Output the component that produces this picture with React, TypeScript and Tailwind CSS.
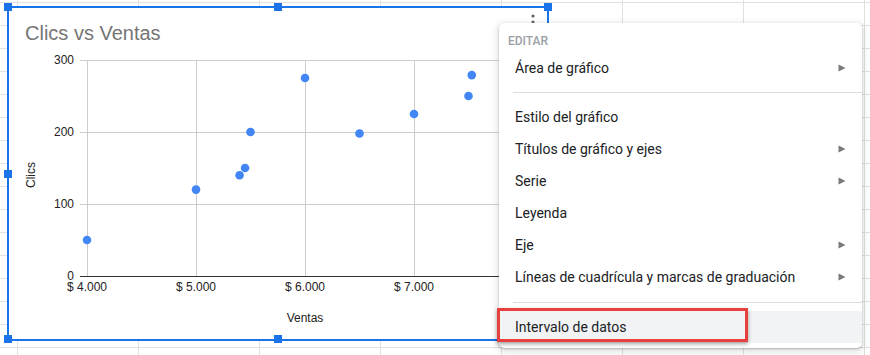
import React from "react";

const pts: [number, number][] = [
  [4000, 50],
  [5000, 120],
  [5400, 140],
  [5450, 150],
  [5500, 200],
  [6000, 275],
  [6500, 198],
  [7000, 225],
  [7500, 250],
  [7530, 279],
];

const sx = (v: number) => 78 + (v - 4000) * 0.109;
const sy = (c: number) => 231 - c * 0.72;

function Arrow() {
  return (
    <svg width="8" height="8" viewBox="0 0 8 8" className="shrink-0">
      <polygon points="0.5,0.5 7.5,4 0.5,7.5" fill="#7a7a7a" />
    </svg>
  );
}

function Item({ label, arrow }: { label: string; arrow?: boolean }) {
  return (
    <div className="h-8 flex items-center justify-between pl-4 pr-4 text-[14px] text-[#202124]">
      <span>{label}</span>
      {arrow ? <Arrow /> : null}
    </div>
  );
}

function Handle({ cls }: { cls: string }) {
  return <div className={`absolute w-2 h-2 bg-[#1a73e8] ${cls}`} />;
}

export default function App() {
  const yTicks = [
    { v: 300, y: 15 },
    { v: 200, y: 87 },
    { v: 100, y: 159 },
  ];
  const xTicks = [
    { x: 78, l: "$ 4.000" },
    { x: 187, l: "$ 5.000" },
    { x: 296, l: "$ 6.000" },
    { x: 405, l: "$ 7.000" },
  ];
  return (
    <div
      className="relative w-[870px] h-[355px] overflow-hidden bg-white pl-[7px] pt-[6px] bg-[linear-gradient(to_right,#e1e1e1_1px,transparent_1px),linear-gradient(to_bottom,#e1e1e1_1px,transparent_1px)] bg-[size:121px_23px] bg-[position:17px_2px]"
      style={{ fontFamily: "Roboto, 'Liberation Sans', sans-serif" }}
    >
      {/* Chart */}
      <div className="relative w-[542px] h-[335px] bg-white border-2 border-[#1a73e8]">
        <div
          className="pt-[13px] pl-[16px] text-[20px] leading-6 text-[#757575]"
          style={{ fontFamily: "'Liberation Sans', Arial, sans-serif" }}
        >
          Clics vs Ventas
        </div>
        <svg
          width="538"
          height="286"
          viewBox="0 0 538 286"
          className="block"
          style={{ fontFamily: "'Liberation Sans', Arial, sans-serif" }}
        >
          {yTicks.map((t) => (
            <line key={t.v} x1={71} x2={530} y1={t.y + 0.5} y2={t.y + 0.5} stroke="#cccccc" strokeWidth={1} />
          ))}
          {[78, 187, 296, 405, 514].map((x) => (
            <line key={x} x1={x + 0.5} x2={x + 0.5} y1={15} y2={231} stroke="#cccccc" strokeWidth={1} />
          ))}
          <line x1={71} x2={530} y1={231.5} y2={231.5} stroke="#333333" strokeWidth={1} />
          {yTicks.map((t) => (
            <text key={t.v} x={65} y={t.y + 4} textAnchor="end" fontSize={12} fill="#222222">
              {t.v}
            </text>
          ))}
          <text x={65} y={234.5} textAnchor="end" fontSize={12} fill="#222222">
            0
          </text>
          {xTicks.map((t) => (
            <text key={t.l} x={t.x} y={246} textAnchor="middle" fontSize={12} fill="#222222">
              {t.l}
            </text>
          ))}
          <text x={296} y={277} textAnchor="middle" fontSize={12} fill="#222222">
            Ventas
          </text>
          <text
            x={0}
            y={0}
            textAnchor="middle"
            fontSize={12}
            fill="#222222"
            transform="translate(25.5 130) rotate(-90)"
          >
            Clics
          </text>
          {pts.map(([v, c], i) => (
            <circle key={i} cx={sx(v)} cy={sy(c)} r={4.3} fill="#4285f4" />
          ))}
        </svg>
        {/* kebab */}
        <svg width="6" height="18" viewBox="0 0 6 18" className="absolute left-[521px] top-[5px]">
          <circle cx="3" cy="3" r="1.6" fill="#5f6368" />
          <circle cx="3" cy="9" r="1.6" fill="#5f6368" />
          <circle cx="3" cy="15" r="1.6" fill="#5f6368" />
        </svg>
        {/* handles */}
        <Handle cls="-left-[5px] -top-[5px]" />
        <Handle cls="left-[265px] -top-[5px]" />
        <Handle cls="left-[535px] -top-[5px]" />
        <Handle cls="-left-[5px] top-[162px]" />
        <Handle cls="left-[535px] top-[162px]" />
        <Handle cls="-left-[5px] top-[327px]" />
        <Handle cls="left-[265px] top-[327px]" />
        <Handle cls="left-[535px] top-[327px]" />
      </div>

      {/* Context menu */}
      <div className="absolute left-[499px] top-[23px] w-[363px] h-[325px] bg-white rounded-[5px] shadow-[0_1px_2px_0_rgba(60,64,67,0.3),0_2px_6px_2px_rgba(60,64,67,0.15)]">
        <div className="h-[29px] pt-[10px] pl-[9px] text-[12px] leading-4 font-medium text-[#9aa0a6]">
          EDITAR
        </div>
        <Item label="Área de gráfico" arrow />
        <div className="ml-[14px] my-2 h-px bg-[#dadce0]" />
        <Item label="Estilo del gráfico" />
        <Item label="Títulos de gráfico y ejes" arrow />
        <Item label="Serie" arrow />
        <Item label="Leyenda" />
        <Item label="Eje" arrow />
        <Item label="Líneas de cuadrícula y marcas de graduación" arrow />
        <div className="ml-[14px] mt-[9px] mb-2 h-px bg-[#dadce0]" />
        <div className="relative h-8 flex items-center pl-4 bg-[#f1f3f4] text-[14px] text-[#202124]">
          <span>Intervalo de datos</span>
          <div className="absolute -left-[2px] -top-[3px] w-[251px] h-[34px] border-[3px] border-[#e8403e] shadow-[0_2px_4px_rgba(0,0,0,0.35)]" />
        </div>
      </div>
    </div>
  );
}
